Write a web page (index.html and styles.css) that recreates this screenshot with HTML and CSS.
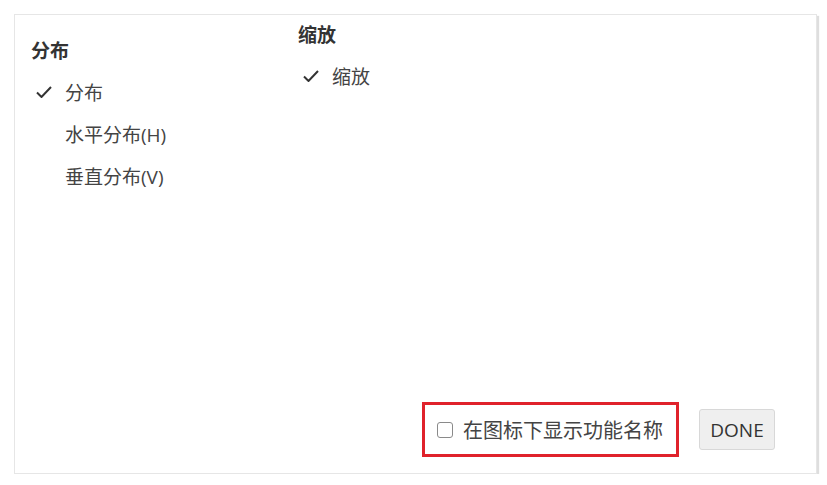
FILE: index.html
```html
<!DOCTYPE html>
<html lang="zh-CN">
<head>
    <meta charset="UTF-8">
    <meta name="viewport" content="width=device-width, initial-scale=1.0">
    <title>工具栏设置</title>
    <link rel="stylesheet" href="styles.css">
</head>
<body>
    <div class="panel">
        <div class="groups">
            <div class="group group_dist">
                <div class="group_title">分布</div>
                <div class="item">
                    <span class="check">
                        <svg width="16" height="12" viewBox="0 0 16 12"><polyline points="1,6.5 5.5,11 15,1" fill="none" stroke="#333" stroke-width="2"/></svg>
                    </span>
                    <span>分布</span>
                </div>
                <div class="item">
                    <span class="check"></span>
                    <span>水平分布(H)</span>
                </div>
                <div class="item">
                    <span class="check"></span>
                    <span>垂直分布(V)</span>
                </div>
            </div>
            <div class="group group_zoom">
                <div class="group_title">缩放</div>
                <div class="item">
                    <span class="check">
                        <svg width="16" height="12" viewBox="0 0 16 12"><polyline points="1,6.5 5.5,11 15,1" fill="none" stroke="#333" stroke-width="2"/></svg>
                    </span>
                    <span>缩放</span>
                </div>
            </div>
        </div>
        <div class="footer">
            <label class="show_names">
                <input type="checkbox" class="box">
                <span>在图标下显示功能名称</span>
            </label>
            <button class="button">DONE</button>
        </div>
    </div>
</body>
</html>
```

FILE: styles.css
```css
body {
    margin: 0;
    font-family: "Open Sans", "Noto Sans CJK SC", sans-serif;
    color: #444;
    background: #fff;
}

.panel {
    margin: 14px 0 0 14px;
    width: 801px;
    height: 458px;
    border: 1px solid #e6e6e6;
    box-shadow: 2px 2px 1px rgba(0, 0, 0, 0.13);
    display: flex;
    flex-direction: column;
    justify-content: space-between;
}

.groups {
    display: flex;
}

.group {
    display: flex;
    flex-direction: column;
}

.group_dist {
    width: 267px;
    padding: 17px 0 0 16px;
}

.group_zoom {
    padding-top: 1px;
}

.group_title {
    height: 39px;
    line-height: 39px;
    font-size: 19px;
    font-weight: bold;
    color: #333;
}

.item {
    display: flex;
    align-items: center;
    height: 42px;
    font-size: 19px;
}

.check {
    width: 34px;
    padding-left: 5px;
    box-sizing: border-box;
    display: flex;
    align-items: center;
}

.footer {
    display: flex;
    justify-content: flex-end;
    align-items: center;
    gap: 20px;
    padding: 0 41px 16px 0;
}

.show_names {
    display: flex;
    align-items: center;
    width: 257px;
    height: 55px;
    box-sizing: border-box;
    border: 3px solid #e0222b;
    padding-left: 12px;
    font-size: 20px;
    color: #444;
}

.box {
    appearance: none;
    -webkit-appearance: none;
    width: 16px;
    height: 16px;
    margin: 0 10px 0 0;
    border: 1px solid #8a8a8a;
    border-radius: 3px;
    background: #fff;
}

.button {
    width: 76px;
    height: 41px;
    background: #efefef;
    border: 1px solid #d8d8d8;
    border-radius: 3px;
    font-family: "Open Sans", sans-serif;
    font-size: 19px;
    color: #333;
    padding: 0;
}
```
